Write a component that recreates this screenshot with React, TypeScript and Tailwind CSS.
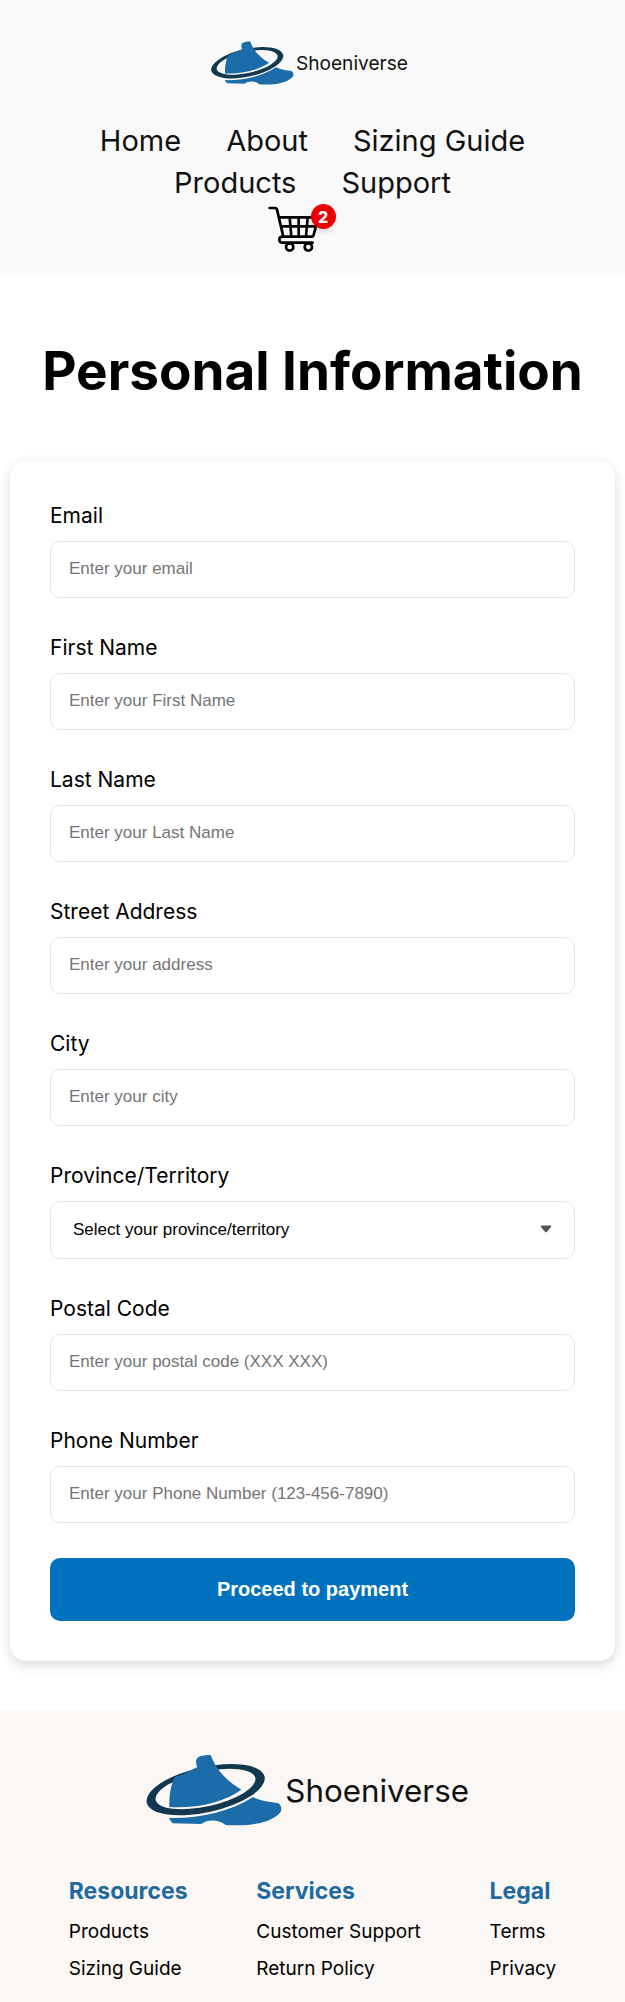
interface Field {
  id: string;
  label: string;
  placeholder: string;
  type?: string;
}

interface FooterColumn {
  title: string;
  links: string[];
}

const navLinks = ["Home", "About", "Sizing Guide", "Products", "Support"];

const addressFields: Field[] = [
  { id: "email", label: "Email", placeholder: "Enter your email", type: "email" },
  { id: "firstName", label: "First Name", placeholder: "Enter your First Name" },
  { id: "lastName", label: "Last Name", placeholder: "Enter your Last Name" },
  { id: "address", label: "Street Address", placeholder: "Enter your address" },
  { id: "city", label: "City", placeholder: "Enter your city" },
];

const contactFields: Field[] = [
  { id: "postalCode", label: "Postal Code", placeholder: "Enter your postal code (XXX XXX)" },
  { id: "phone", label: "Phone Number", placeholder: "Enter your Phone Number (123-456-7890)", type: "tel" },
];

const provinces = [
  "Alberta",
  "British Columbia",
  "Manitoba",
  "New Brunswick",
  "Newfoundland and Labrador",
  "Northwest Territories",
  "Nova Scotia",
  "Nunavut",
  "Ontario",
  "Prince Edward Island",
  "Quebec",
  "Saskatchewan",
  "Yukon",
];

const footerColumns: FooterColumn[] = [
  { title: "Resources", links: ["Products", "Sizing Guide"] },
  { title: "Services", links: ["Customer Support", "Return Policy"] },
  { title: "Legal", links: ["Terms", "Privacy"] },
];

const Logo = ({ className }: { className: string }) => (
  <svg viewBox="78 72 999 216" className={className} role="img" aria-label="Shoeniverse">
    {/* Ring around the boot */}
    <path
      transform="translate(257 179) rotate(-12.5)"
      fillRule="evenodd"
      fill="#12384f"
      d="M-181 0A181 68 0 1 1 181 0A181 68 0 1 1 -181 0ZM-153 -2A153 52 0 1 0 153 -2A153 52 0 1 0 -153 -2Z"
    />
    {/* Boot */}
    <path
      fill="#1b6ca8"
      d="M163 142C190 133 212 122 232 111C226 100 227 88 234 82C245 76 260 75 272 75L280 94C296 127 322 153 364 179C312 216 232 236 148 231C147 200 151 170 163 142Z"
    />
    <path
      fill="#1b6ca8"
      d="M147 264C240 266 330 245 399 201C420 212 450 217 474 219C484 226 486 236 482 245C468 266 425 286 350 286C335 286 325 286 316 284C300 272 284 270 268 272C255 273 250 279 242 282L158 280C153 275 150 270 147 264Z"
    />
    <text
      x="496"
      y="216"
      fontSize="94"
      fill="#111111"
      className="font-['Inter','Liberation_Sans',sans-serif]"
    >
      Shoeniverse
    </text>
  </svg>
);

const CartIcon = () => (
  <svg
    viewBox="50 48 150 144"
    className="h-12 w-[50px]"
    fill="none"
    stroke="#000"
    strokeWidth="8"
    strokeLinecap="round"
    strokeLinejoin="round"
    aria-hidden="true"
  >
    <path d="M58 57H74Q79 57 80 62L99 143" />
    <path d="M88 85H200L197 112L190 137Q189 143 183 143H95Q87 144 87 152T95 161H187" />
    <path d="M95 112H196M118 86L123 142M145 86V142M172 86L167 142" />
    <circle cx="118" cy="174" r="11" />
    <circle cx="174" cy="174" r="11" />
  </svg>
);

const FormField = ({ field }: { field: Field }) => (
  <div className="flex flex-col gap-[10px]">
    <label htmlFor={field.id} className="text-[21px] leading-[30px]">
      {field.label}
    </label>
    <input
      id={field.id}
      name={field.id}
      type={field.type ?? "text"}
      placeholder={field.placeholder}
      className="h-[57px] w-full rounded-[10px] border border-[#e3e6ea] bg-white px-[18px] pb-[2px] font-['Liberation_Sans',sans-serif] text-[17px] placeholder:text-[#757575]"
    />
  </div>
);

export default function App() {
  return (
    <div className="min-h-screen bg-white font-['Inter','Liberation_Sans',sans-serif] text-black">
      <header className="flex flex-col items-center bg-[#f9f9f9] px-10 pt-[41px] pb-[22px]">
        <a href="#">
          <Logo className="h-11 w-[205px]" />
        </a>
        <nav className="mt-[35px] flex flex-wrap justify-center gap-x-[45px] text-[29px] leading-[42px] text-[#111]">
          {navLinks.map((link) => (
            <a key={link} href="#">
              {link}
            </a>
          ))}
        </nav>
        <a href="#" aria-label="Cart, 2 items" className="relative mt-px mr-[42px]">
          <CartIcon />
          <span className="absolute -top-px -right-[19px] flex size-[25px] items-center justify-center rounded-full bg-[#ea0000] text-base font-extrabold text-white shadow-md">
            2
          </span>
        </a>
      </header>

      <main className="flex flex-col px-[10px] pb-[50px]">
        <h1 className="pt-[60px] pb-[54px] text-center text-[53px] leading-[72px] font-bold">
          Personal Information
        </h1>

        <form
          onSubmit={(e) => e.preventDefault()}
          className="flex flex-col gap-[35px] rounded-2xl bg-white p-10 shadow-[0_4px_12px_rgba(0,0,0,0.15)]"
        >
          {addressFields.map((field) => (
            <FormField key={field.id} field={field} />
          ))}

          <div className="flex flex-col gap-[10px]">
            <label htmlFor="province" className="text-[21px] leading-[30px]">
              Province/Territory
            </label>
            <div className="relative">
              <select
                id="province"
                name="province"
                defaultValue=""
                className="block h-[58px] w-full appearance-none rounded-[10px] border border-[#e3e6ea] bg-white px-[22px] font-['Liberation_Sans',sans-serif] text-[17px]"
              >
                <option value="">Select your province/territory</option>
                {provinces.map((province) => (
                  <option key={province}>{province}</option>
                ))}
              </select>
              <svg
                viewBox="0 0 12 8"
                className="pointer-events-none absolute top-6 right-[23px] h-2 w-3"
                aria-hidden="true"
              >
                <path d="M1.5 0.5H10.5Q12 0.5 11 2L7 6.8Q6 7.8 5 6.8L1 2Q0 0.5 1.5 0.5Z" fill="#555" />
              </svg>
            </div>
          </div>

          {contactFields.map((field) => (
            <FormField key={field.id} field={field} />
          ))}

          <button
            type="submit"
            className="h-[63px] rounded-[10px] bg-[#0071bc] pb-[2px] font-['Liberation_Sans',sans-serif] text-xl font-bold text-white"
          >
            Proceed to payment
          </button>
        </form>
      </main>

      <footer className="flex flex-col items-center bg-[#fbf7f4] pt-[43px] pb-5">
        <a href="#">
          <Logo className="h-[72px] w-[333px]" />
        </a>
        <div className="mt-12 flex w-full justify-evenly">
          {footerColumns.map((column) => (
            <div key={column.title} className="flex flex-col">
              <h2 className="text-[23px] leading-[34px] font-bold text-[#1f6a9e]">{column.title}</h2>
              <ul className="mt-[10px] flex flex-col gap-[10px] text-[19px] leading-[27px]">
                {column.links.map((link) => (
                  <li key={link}>
                    <a href="#">{link}</a>
                  </li>
                ))}
              </ul>
            </div>
          ))}
        </div>
      </footer>
    </div>
  );
}
